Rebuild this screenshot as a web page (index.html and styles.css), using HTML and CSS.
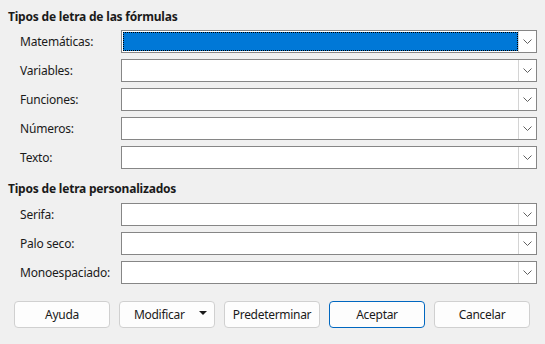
FILE: index.html
```html
<!DOCTYPE html>
<html lang="es">
<head>
<meta charset="utf-8">
<link rel="stylesheet" href="styles.css">
</head>
<body>
<div class="dialog">
  <div class="section">
    <div class="heading">Tipos de letra de las fórmulas</div>
    <div class="rows">
      <div class="label">Matemáticas:</div>
      <div class="combo focused"><div class="field"><div class="sel"></div></div><div class="btn"><svg width="9" height="5" viewBox="0 0 9 5"><path d="M0.5 0.5 L4.5 4.5 L8.5 0.5" fill="none" stroke="#606060" stroke-width="1"/></svg></div></div>
      <div class="label">Variables:</div>
      <div class="combo"><div class="field"></div><div class="btn"><svg width="9" height="5" viewBox="0 0 9 5"><path d="M0.5 0.5 L4.5 4.5 L8.5 0.5" fill="none" stroke="#606060" stroke-width="1"/></svg></div></div>
      <div class="label">Funciones:</div>
      <div class="combo"><div class="field"></div><div class="btn"><svg width="9" height="5" viewBox="0 0 9 5"><path d="M0.5 0.5 L4.5 4.5 L8.5 0.5" fill="none" stroke="#606060" stroke-width="1"/></svg></div></div>
      <div class="label">Números:</div>
      <div class="combo"><div class="field"></div><div class="btn"><svg width="9" height="5" viewBox="0 0 9 5"><path d="M0.5 0.5 L4.5 4.5 L8.5 0.5" fill="none" stroke="#606060" stroke-width="1"/></svg></div></div>
      <div class="label">Texto:</div>
      <div class="combo"><div class="field"></div><div class="btn"><svg width="9" height="5" viewBox="0 0 9 5"><path d="M0.5 0.5 L4.5 4.5 L8.5 0.5" fill="none" stroke="#606060" stroke-width="1"/></svg></div></div>
    </div>
  </div>
  <div class="section second">
    <div class="heading">Tipos de letra personalizados</div>
    <div class="rows">
      <div class="label">Serifa:</div>
      <div class="combo"><div class="field"></div><div class="btn"><svg width="9" height="5" viewBox="0 0 9 5"><path d="M0.5 0.5 L4.5 4.5 L8.5 0.5" fill="none" stroke="#606060" stroke-width="1"/></svg></div></div>
      <div class="label">Palo seco:</div>
      <div class="combo"><div class="field"></div><div class="btn"><svg width="9" height="5" viewBox="0 0 9 5"><path d="M0.5 0.5 L4.5 4.5 L8.5 0.5" fill="none" stroke="#606060" stroke-width="1"/></svg></div></div>
      <div class="label">Monoespaciado:</div>
      <div class="combo"><div class="field"></div><div class="btn"><svg width="9" height="5" viewBox="0 0 9 5"><path d="M0.5 0.5 L4.5 4.5 L8.5 0.5" fill="none" stroke="#606060" stroke-width="1"/></svg></div></div>
    </div>
  </div>
  <div class="buttons">
    <div class="button">Ayuda</div>
    <div class="button menu"><span>Modificar</span><svg class="tri" width="8" height="4" viewBox="0 0 8 4"><path d="M0 0 H8 L4 4 Z" fill="#1a1a1a"/></svg></div>
    <div class="button">Predeterminar</div>
    <div class="button default">Aceptar</div>
    <div class="button">Cancelar</div>
  </div>
</div>
</body>
</html>
```
FILE: styles.css
```css
html, body {
  margin: 0;
  padding: 0;
  background: #f0f0f0;
}
body {
  width: 545px;
  height: 344px;
  overflow: hidden;
  font-family: "Noto Sans", "DejaVu Sans", sans-serif;
  font-size: 12px;
  color: #1a1a1a;
}
.dialog {
  display: flex;
  flex-direction: column;
  padding: 8px 8px 0 8px;
}
.heading {
  font-weight: bold;
  height: 18px;
  line-height: 18px;
  letter-spacing: -0.2px;
}
.rows {
  display: grid;
  grid-template-columns: 101px 416px;
  grid-auto-rows: 23px;
  row-gap: 6px;
  margin-top: 4px;
  padding-left: 12px;
}
.second {
  margin-top: 11px;
}
.second .rows {
  margin-top: 5px;
}
.label {
  line-height: 23px;
  letter-spacing: -0.2px;
}
.combo {
  display: flex;
  border: 1px solid #868686;
  background: #ffffff;
  box-sizing: border-box;
}
.field {
  flex: 1;
  display: flex;
  padding: 1px 0 1px 1px;
}
.sel {
  flex: 1;
  background: #0078d7;
  outline: 1px dotted #000;
  outline-offset: -1px;
}
.btn {
  width: 17px;
  border-left: 1px solid #d4d4d4;
  display: flex;
  align-items: center;
  justify-content: center;
}
.btn svg {
  display: block;
}
.buttons {
  display: flex;
  gap: 9px;
  margin-top: 17px;
  padding-left: 6px;
}
.button {
  width: 96px;
  height: 27px;
  box-sizing: border-box;
  border: 1px solid #d0d0d0;
  border-radius: 4px;
  background: #fdfdfd;
  display: flex;
  align-items: center;
  justify-content: center;
  letter-spacing: -0.3px;
}
.button.menu {
  justify-content: flex-start;
  padding-left: 14px;
  gap: 14px;
}
.button.menu .tri {
  display: block;
  margin-top: -3px;
}
.button.default {
  border-color: #0067c0;
}
```
